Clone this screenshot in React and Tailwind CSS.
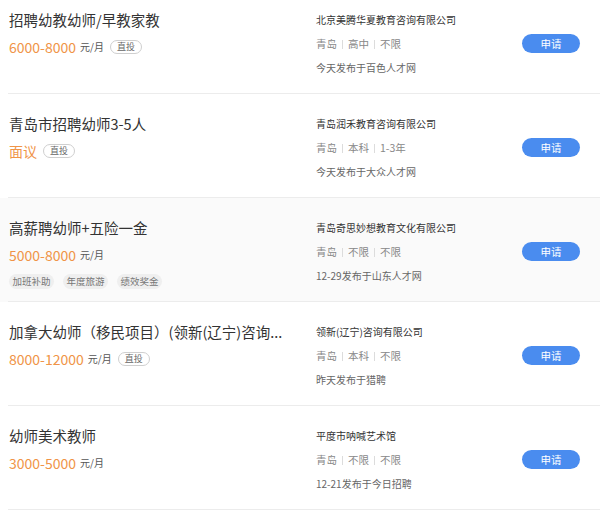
import React from "react";

const jobs = [
  {
    title: "招聘幼教幼师/早教家教",
    salary: "6000-8000",
    unit: true,
    direct: true,
    company: "北京美腾华夏教育咨询有限公司",
    loc: ["青岛", "高中", "不限"],
    date: "今天发布于百色人才网",
  },
  {
    title: "青岛市招聘幼师3-5人",
    salary: "面议",
    unit: false,
    direct: true,
    company: "青岛润禾教育咨询有限公司",
    loc: ["青岛", "本科", "1-3年"],
    date: "今天发布于大众人才网",
  },
  {
    title: "高薪聘幼师+五险一金",
    salary: "5000-8000",
    unit: true,
    direct: false,
    tags: ["加班补助", "年度旅游", "绩效奖金"],
    gray: true,
    company: "青岛奇思妙想教育文化有限公司",
    loc: ["青岛", "不限", "不限"],
    date: "12-29发布于山东人才网",
  },
  {
    title: "加拿大幼师（移民项目）(领新(辽宁)咨询...",
    salary: "8000-12000",
    unit: true,
    direct: true,
    company: "领新(辽宁)咨询有限公司",
    loc: ["青岛", "本科", "不限"],
    date: "昨天发布于猎聘",
  },
  {
    title: "幼师美术教师",
    salary: "3000-5000",
    unit: true,
    direct: false,
    company: "平度市呐喊艺术馆",
    loc: ["青岛", "不限", "不限"],
    date: "12-21发布于今日招聘",
  },
];

export default function App() {
  return (
    <div
      className="w-[600px] h-[514px] overflow-hidden bg-white"
      style={{ fontFamily: '"Noto Sans CJK SC", "Noto Sans", sans-serif' }}
    >
      <div className="-mt-[10px]">
        {jobs.map((j, i) => (
          <div key={i} className={j.gray ? "bg-[#fafafa]" : "bg-white"}>
            <div className="flex h-[103px] pl-[9px]">
              <div className="w-[307px] pt-[20px]">
                <div className="h-[20px] leading-[20px] text-[14.5px] text-[#333] whitespace-nowrap">
                  {j.title}
                </div>
                <div className="mt-[7px] h-[20px] flex items-center">
                  <span className="text-[14px] text-[#f09447] leading-[20px]">{j.salary}</span>
                  {j.unit && (
                    <span className="ml-[4px] text-[10px] text-[#555] leading-[20px]">元/月</span>
                  )}
                  {j.direct && (
                    <span className="ml-[6px] h-[14px] px-[6px] rounded-full border border-[#cfcfcf] text-[9px] leading-[12px] text-[#666] flex items-center">
                      直投
                    </span>
                  )}
                </div>
                {j.tags && (
                  <div className="mt-[9px] flex gap-[9px]">
                    {j.tags.map((t) => (
                      <span
                        key={t}
                        className="h-[15px] w-[45px] rounded-full bg-[#efefef] text-[9.5px] text-[#777] flex items-center justify-center"
                      >
                        {t}
                      </span>
                    ))}
                  </div>
                )}
              </div>
              <div className="flex-1 pt-[22px]">
                <div className="h-[16px] leading-[16px] text-[10px] text-[#333] whitespace-nowrap">{j.company}</div>
                <div className="mt-[8px] h-[16px] leading-[16px] text-[10.5px] text-[#888] flex items-center">
                  {j.loc.map((l, k) => (
                    <React.Fragment key={k}>
                      {k > 0 && <span className="mx-[5px] w-px h-[9px] bg-[#dcdcdc]" />}
                      <span>{l}</span>
                    </React.Fragment>
                  ))}
                </div>
                <div className="mt-[8px] h-[16px] leading-[16px] text-[10px] text-[#666]">{j.date}</div>
              </div>
              <div className="w-[78px] pt-[44px]">
                <button className="w-[58px] h-[19px] rounded-full bg-[#4a8cef] text-white text-[10.5px] flex items-center justify-center">
                  申请
                </button>
              </div>
            </div>
            <div className="ml-[8px] h-px bg-[#ececec]" />
          </div>
        ))}
      </div>
    </div>
  );
}
